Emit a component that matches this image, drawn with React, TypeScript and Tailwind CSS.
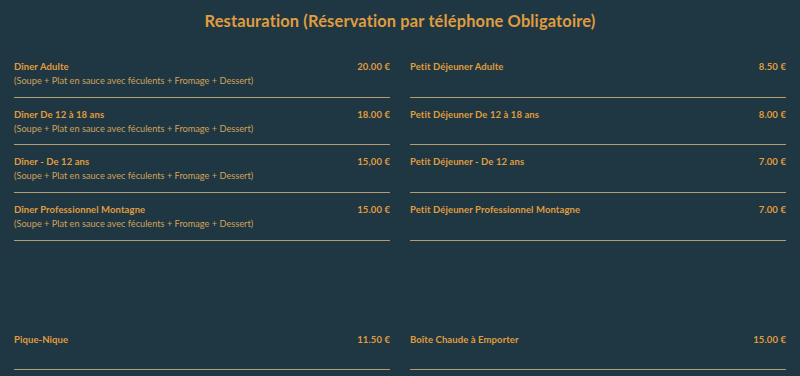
import React from 'react';

type Item = { name: string; price: string; desc?: string };

const left: Item[] = [
  { name: 'Dîner Adulte', price: '20.00 €', desc: '(Soupe + Plat en sauce avec féculents + Fromage + Dessert)' },
  { name: 'Dîner De 12 à 18 ans', price: '18.00 €', desc: '(Soupe + Plat en sauce avec féculents + Fromage + Dessert)' },
  { name: 'Dîner - De 12 ans', price: '15,00 €', desc: '(Soupe + Plat en sauce avec féculents + Fromage + Dessert)' },
  { name: 'Dîner Professionnel Montagne', price: '15.00 €', desc: '(Soupe + Plat en sauce avec féculents + Fromage + Dessert)' },
];

const right: Item[] = [
  { name: 'Petit Déjeuner Adulte', price: '8.50 €' },
  { name: 'Petit Déjeuner De 12 à 18 ans', price: '8.00 €' },
  { name: 'Petit Déjeuner - De 12 ans', price: '7.00 €' },
  { name: 'Petit Déjeuner Professionnel Montagne', price: '7.00 €' },
];

const Row: React.FC<{ item: Item }> = ({ item }) => (
  <div className="pt-[10px] pb-[8.7px] border-b border-[#b39d72]">
    <div className="flex justify-between items-center h-[14px] text-[9.5px] font-bold tracking-[0.01em] text-[#e09d3e]">
      <span>{item.name}</span>
      <span>{item.price}</span>
    </div>
    <div className="h-[14px] leading-[14px] text-[9.2px] text-[#cfa35c]">{item.desc}</div>
  </div>
);

export default function App() {
  return (
    <div
      className="w-[800px] h-[376px] overflow-hidden bg-[#1f3643] px-[14px]"
      style={{ fontFamily: 'Lato, "Open Sans", sans-serif' }}
    >
      <h1 className="pt-[9px] h-[50px] text-center text-[16.4px] font-bold tracking-[0.01em] text-[#e09d3e]">
        Restauration (Réservation par téléphone Obligatoire)
      </h1>
      <div className="grid grid-cols-2 gap-x-[20px]">
        <div>
          {left.map((it) => (
            <Row key={it.name} item={it} />
          ))}
        </div>
        <div>
          {right.map((it) => (
            <Row key={it.name} item={it} />
          ))}
        </div>
      </div>
      <div className="grid grid-cols-2 gap-x-[20px] mt-[82px]">
        <Row item={{ name: 'Pique-Nique', price: '11.50 €' }} />
        <Row item={{ name: 'Boîte Chaude à Emporter', price: '15.00 €' }} />
      </div>
    </div>
  );
}
